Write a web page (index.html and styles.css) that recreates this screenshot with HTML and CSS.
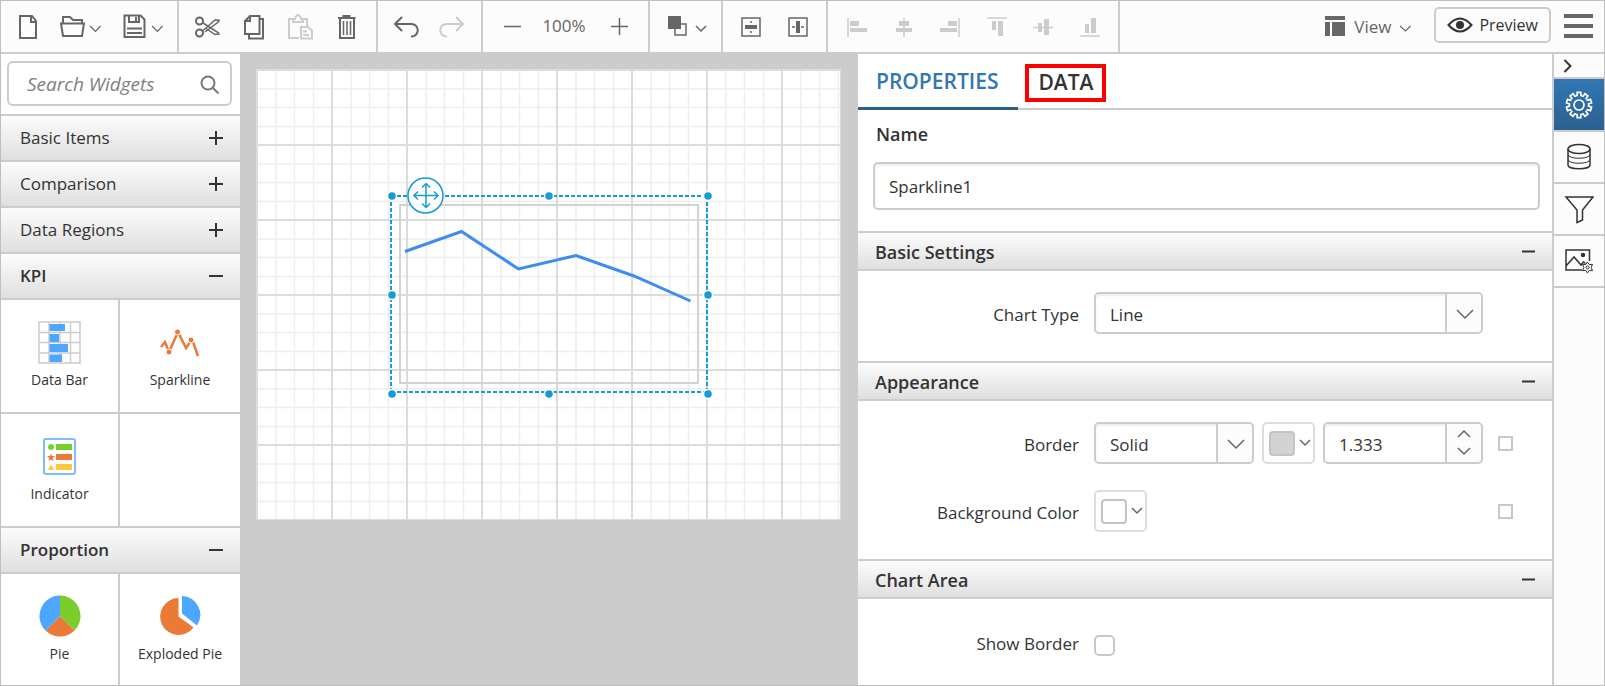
FILE: index.html
```html
<!DOCTYPE html>
<html lang="en">
<head>
<meta charset="utf-8">
<title>Report Designer</title>
<link rel="stylesheet" href="styles.css">
</head>
<body>
<div class="app">
  <header class="toolbar">
    <div class="group group-file">
      <button class="tool" aria-label="New"><svg width="24" height="28" class="ico"><path d="M4 3h12l4 5v17H4z"/><path d="M15 3v6h5"/></svg></button>
      <button class="tool" aria-label="Open"><svg width="44" height="28" class="ico"><path d="M4 10V4h7l3 3h9v3M2 10.500h23l-2 12.500H4z"/><path class="thin" d="M31 13l5.500 5.500L41.500 13"/></svg></button>
      <button class="tool" aria-label="Save"><svg width="44" height="28" class="ico"><path d="M2.500 2.500h16l4 4v17.500h-20zM7 2.500V9h10V2.500M5 15.500h15M5 20h15"/><path d="M14 4v4"/><path class="thin" d="M30 13l5.500 5.500L40.500 13"/></svg></button>
    </div>
    <div class="group group-edit">
      <button class="tool" aria-label="Cut"><svg width="28" height="28" class="ico"><circle cx="5.500" cy="8" r="3.500"/><circle cx="5.500" cy="20" r="3.500"/><path class="mid" d="M9 10l15 9.500 1 1.500-4 .5L12 15.500M8.500 18L21 7l4 .2-.5 1.600L11 19"/></svg></button>
      <button class="tool" aria-label="Copy"><svg width="24" height="28" class="ico"><path d="M8 3h9.500v18H3V8zM8 3v5H3M18 6h3v19.500H7V22"/></svg></button>
      <button class="tool" aria-label="Paste" disabled><svg width="28" height="28" class="ico"><path d="M13 25H3V6h4M17 6h4v7M7 9V6h2q1-4 3-4t3 4h2v3zM15 14h7l4 4v7.500H15zM17 18.500h4M17 22h6"/></svg></button>
      <button class="tool" aria-label="Delete"><svg width="24" height="28" class="ico"><path d="M4 5h17.500M9.500 5V3h6v2M6 5v20h14V5"/><path class="mid" d="M9.500 8v14M13 8v14M16.500 8v14"/></svg></button>
    </div>
    <div class="group group-history">
      <button class="tool" aria-label="Undo"><svg width="28" height="28" class="ico"><path d="M10 4L3 11l7 7M3 11h16.500a6 6 0 0 1 0 12.500H19"/></svg></button>
      <button class="tool" aria-label="Redo" disabled><svg width="28" height="28" class="ico"><path d="M18 4l7 7-7 7M25 11H8.500a6 6 0 0 0 0 12.500H9"/></svg></button>
    </div>
    <div class="group group-zoom">
      <button class="tool" aria-label="Zoom out"><svg width="21" height="28" class="ico"><path class="mid" d="M2 13.500h17"/></svg></button>
      <output class="zoom">100%</output>
      <button class="tool" aria-label="Zoom in"><svg width="21" height="28" class="ico"><path class="mid" d="M2 13.500h17M10.500 5v17"/></svg></button>
    </div>
    <div class="group group-order">
      <button class="tool" aria-label="Order"><svg width="43" height="28" class="ico"><rect class="mid" x="9" y="11" width="11" height="11"/><rect class="solid" x="2" y="3" width="13" height="13"/><path class="mid" d="M30 13l5 5 5-5"/></svg></button>
    </div>
    <div class="group group-center">
      <button class="tool" aria-label="Center horizontally"><svg width="24" height="28" class="ico"><rect class="mid" x="3" y="5" width="18" height="18"/><path class="solid" d="M6 12h12v4H6z"/><path class="mid" d="M12 8v2M12 18v2"/></svg></button>
      <button class="tool" aria-label="Center vertically"><svg width="24" height="28" class="ico"><rect class="mid" x="3" y="5" width="18" height="18"/><path class="solid" d="M10 8h4v12h-4z"/><path class="mid" d="M6 14h3M15 14h3"/></svg></button>
    </div>
    <div class="group group-align">
      <button class="tool" aria-label="Align left" disabled><svg width="24" height="28" class="ico"><path class="mid" d="M3 5v19"/><path class="solid" d="M5 8h9v5H5zM5 15h17v4H5z"/></svg></button>
      <button class="tool" aria-label="Align center" disabled><svg width="24" height="28" class="ico"><path class="mid" d="M12 5v19"/><path class="solid" d="M7 8h10v5H7zM4 15h16v4H4z"/></svg></button>
      <button class="tool" aria-label="Align right" disabled><svg width="24" height="28" class="ico"><path class="mid" d="M21 5v19"/><path class="solid" d="M10 8h9v5h-9zM2 15h17v4H2z"/></svg></button>
      <button class="tool" aria-label="Align top" disabled><svg width="24" height="28" class="ico"><path class="mid" d="M2 5h20"/><path class="solid" d="M7 8h4v9H7zM13 8h5v15h-5z"/></svg></button>
      <button class="tool" aria-label="Align middle" disabled><svg width="24" height="28" class="ico"><path class="mid" d="M2 14.500h20"/><path class="solid" d="M7 10h4v9H7zM13 6h5v16h-5z"/></svg></button>
      <button class="tool" aria-label="Align bottom" disabled><svg width="24" height="28" class="ico"><path class="mid" d="M2 23h20"/><path class="solid" d="M7 11h4v9H7zM13 5h5v15h-5z"/></svg></button>
    </div>
    <div class="actions">
      <button class="tool view"><svg width="24" height="28" class="ico"><path class="solid" d="M2 3h20v4H2zM2 9h5v14H2zM9 9h13v14H9z"/></svg><span>View</span><svg width="15" height="28" class="ico"><path class="thin" d="M2 13l5.500 5 5-5"/></svg></button>
      <button class="preview"><svg width="26" height="18" class="eye"><path d="M1.500 9Q13-4 24.500 9 13 22 1.500 9z"/><circle cx="13" cy="9" r="4"/></svg><span>Preview</span></button>
      <button class="tool menu" aria-label="Menu"><svg width="32" height="28" class="ico"><path class="solid" d="M1 1h29v4H1zM1 11h29v4H1zM1 21h29v4H1z"/></svg></button>
    </div>
  </header>

  <div class="workspace">
    <aside class="widgets">
      <div class="search-area">
        <label class="search">
          <input type="search" placeholder="Search Widgets" aria-label="Search Widgets">
          <svg width="22" height="22"><circle cx="10" cy="10" r="6.500"/><path d="M14.500 14.500l6 6"/></svg>
        </label>
      </div>
      <button class="category"><span>Basic Items</span><svg width="14" height="14"><path d="M0 7h14M7 0v14"/></svg></button>
      <button class="category"><span>Comparison</span><svg width="14" height="14"><path d="M0 7h14M7 0v14"/></svg></button>
      <button class="category"><span>Data Regions</span><svg width="14" height="14"><path d="M0 7h14M7 0v14"/></svg></button>
      <button class="category open"><span>KPI</span><svg width="14" height="14"><path d="M0 7h14"/></svg></button>
      <div class="tiles">
        <button class="tile">
          <svg width="44" height="44"><g fill="none" stroke="#ccc" stroke-width="1.500"><path d="M1 1h41v41H1zM11 1v41M22 1v41M32.500 1v41M1 11.500h41M1 21.500h41M1 32h41"/></g><path fill="#4da6ff" d="M11.500 3H27v7H11.500zM11.500 13H21v8h-9.500zM11.500 23H30v8H11.500zM11.500 33.500H24V41H11.500z"/></svg>
          <span>Data Bar</span>
        </button>
        <button class="tile">
          <svg width="44" height="44"><path fill="none" stroke="#eb7a37" stroke-width="2.500" d="M3 26l4-5 4 10L20 11l8 16 6-9 6 17"/><g fill="#eb7a37" stroke="#fff"><circle cx="11" cy="31" r="3"/><circle cx="19.500" cy="11" r="3"/><circle cx="33" cy="19" r="3"/></g></svg>
          <span>Sparkline</span>
        </button>
        <button class="tile">
          <svg width="44" height="44"><rect x="6" y="4" width="31" height="35" rx="2" fill="#fff" stroke="#7dbcff" stroke-width="2"/><circle cx="13" cy="12" r="3" fill="#7bcd29"/><path fill="#7bcd29" d="M18 9h16v6H18z"/><path fill="#eb7a37" d="M18 19h16v6H18zM13 18.500l1 2.500h3l-2.200 2 .8 3-2.600-1.600L10.400 26l.8-3L9 21h3z"/><path fill="#fdc840" d="M18 29h16v6H18zM13 29l3 6h-6z"/></svg>
          <span>Indicator</span>
        </button>
        <div class="tile"></div>
      </div>
      <button class="category open"><span>Proportion</span><svg width="14" height="14"><path d="M0 7h14"/></svg></button>
      <div class="tiles">
        <button class="tile">
          <svg width="44" height="44"><path fill="#7bcd29" d="M22 21V.5A20.500 20.500 0 0 1 36.500 35.500z"/><path fill="#eb7a37" d="M22 21l14.500 14.500a20.500 20.500 0 0 1-29 0z"/><path fill="#4da6ff" d="M22 21L7.500 35.500A20.500 20.500 0 0 1 22 .5z"/></svg>
          <span>Pie</span>
        </button>
        <button class="tile">
          <svg width="44" height="44"><path fill="#eb7a37" d="M20.500 21.500V3A18.500 18.500 0 1 0 35.500 32.500z"/><path fill="#4da6ff" d="M24 18.500V1a19 19 0 0 1 15 29.500z"/></svg>
          <span>Exploded Pie</span>
        </button>
      </div>
    </aside>

    <main class="canvas">
      <div class="sheet">
        <svg class="grid" width="100%" height="100%">
          <defs>
            <pattern id="grid" x="1" y="1" width="75" height="75" patternUnits="userSpaceOnUse">
              <path class="minor" d="M18 0v75M36.500 0v75M55.500 0v75M0 18h75M0 36.500h75M0 55.500h75"/>
              <path class="major" d="M74 0v75M0 74h75"/>
            </pattern>
          </defs>
          <rect width="100%" height="100%" fill="url(#grid)"/>
        </svg>
        <svg class="item" width="328" height="226">
          <rect class="frame" x="14" y="32" width="298" height="178"/>
          <polyline class="series" points="19,78.500 75.500,58.500 132.500,96 190,82.500 248,103 304.500,128"/>
          <path class="outline" d="M5 23h317M5 219h317M5 23v197M321 23v197"/>
          <g class="handles">
            <circle cx="6" cy="23" r="4.500"/><circle cx="163" cy="23" r="4.500"/><circle cx="322" cy="23" r="4.500"/>
            <circle cx="6" cy="122" r="4.500"/><circle cx="322" cy="122" r="4.500"/>
            <circle cx="6" cy="221" r="4.500"/><circle cx="163" cy="221" r="4.500"/><circle cx="322" cy="221" r="4.500"/>
          </g>
          <g class="mover"><circle cx="39.500" cy="22.500" r="17.500"/><path d="M28 22.500h24M40 10.500v24M36 14.500l4-4 4 4M36 30.500l4 4 4-4M32 18.500l-4 4 4 4M48 18.500l4 4-4 4"/></g>
        </svg>
      </div>
    </main>

    <section class="props">
      <nav class="tabs">
        <button class="tab active">PROPERTIES</button>
        <button class="tab marked">DATA</button>
      </nav>
      <div class="name-block">
        <label for="name">Name</label>
        <input id="name" class="field" type="text" value="Sparkline1">
      </div>
      <button class="section"><span>Basic Settings</span><svg width="13" height="3"><path d="M0 1.500h13"/></svg></button>
      <div class="rows">
        <div class="row">
          <label for="type">Chart Type</label>
          <div class="controls">
            <div class="combo"><select id="type"><option>Line</option></select><svg width="36" height="38"><path d="M10 16l8 8 8-8"/></svg></div>
          </div>
        </div>
      </div>
      <button class="section"><span>Appearance</span><svg width="13" height="3"><path d="M0 1.500h13"/></svg></button>
      <div class="rows">
        <div class="row">
          <label for="border">Border</label>
          <div class="controls">
            <div class="combo"><select id="border"><option>Solid</option></select><svg width="36" height="38"><path d="M10 16l8 8 8-8"/></svg></div>
            <button class="color" aria-label="Border color"><i class="swatch gray"></i><svg width="12" height="8"><path d="M1 1l5 5 5-5"/></svg></button>
            <div class="combo"><input type="text" value="1.333" aria-label="Border width"><svg width="36" height="38"><path d="M11 13l6-6 6 6M11 24l6 6 6-6"/></svg></div>
          </div>
          <input class="reset" type="checkbox" aria-label="Border expression">
        </div>
        <div class="row">
          <label for="bg">Background Color</label>
          <div class="controls">
            <button id="bg" class="color"><i class="swatch"></i><svg width="12" height="8"><path d="M1 1l5 5 5-5"/></svg></button>
          </div>
          <input class="reset" type="checkbox" aria-label="Background expression">
        </div>
      </div>
      <button class="section"><span>Chart Area</span><svg width="13" height="3"><path d="M0 1.500h13"/></svg></button>
      <div class="rows last">
        <div class="row">
          <label for="show">Show Border</label>
          <div class="controls"><input id="show" class="check" type="checkbox"></div>
        </div>
      </div>
    </section>

    <nav class="rail">
      <button class="collapse" aria-label="Collapse"><svg width="10" height="14"><path d="M1.500 1l6 6-6 6"/></svg></button>
      <button class="rail-item selected" aria-label="Properties">
        <svg width="30" height="30" viewBox="-15 -15 30 30">
          <defs><path id="tooth" d="M-2.900-9.200L-1.900-9.500-1.800-12.600H1.800L1.900-9.500 2.900-9.200"/></defs>
          <use href="#tooth"/><use href="#tooth" transform="rotate(36)"/><use href="#tooth" transform="rotate(72)"/><use href="#tooth" transform="rotate(108)"/><use href="#tooth" transform="rotate(144)"/><use href="#tooth" transform="rotate(180)"/><use href="#tooth" transform="rotate(216)"/><use href="#tooth" transform="rotate(252)"/><use href="#tooth" transform="rotate(288)"/><use href="#tooth" transform="rotate(324)"/>
          <circle r="5"/>
        </svg>
      </button>
      <button class="rail-item" aria-label="Data"><svg width="30" height="30"><ellipse cx="15" cy="7" rx="11" ry="4.500"/><path d="M4 7v16c0 5 22 5 22 0V7"/><path class="fine" d="M4 12.500c0 5 22 5 22 0M4 17.500c0 5 22 5 22 0"/></svg></button>
      <button class="rail-item" aria-label="Filter"><svg width="30" height="30"><path d="M2 3h27L18.500 16v10L13 28.500V16z"/></svg></button>
      <button class="rail-item" aria-label="Image settings"><svg width="30" height="30"><path d="M18 24H2V4h23.500v11M2 20l8-9 7 8 2.500-3 2 1.500"/><circle class="dot" cx="19" cy="9" r="1.500"/><path class="fine" d="M23.500 16l1.700 2.600 3.300-.3-1.300 3.200 1.300 3.200-3.300-.3L23.500 27l-1.700-2.600-3.300.3 1.300-3.200-1.300-3.200 3.300.3z"/><circle class="fine" cx="23.500" cy="21.500" r="1.500"/></svg></button>
    </nav>
  </div>
</div>
</body>
</html>
```

FILE: styles.css
```css
* { box-sizing: border-box; }

body {
  margin: 0;
  font-family: "Open Sans", "Noto Sans", sans-serif;
  font-size: 17px;
  color: #333;
}

button, input, select {
  font: inherit;
  color: inherit;
  margin: 0;
  padding: 0;
  border: 0;
  background: none;
}

button { cursor: pointer; }
svg { display: block; flex: none; }

.app {
  height: 100vh;
  min-height: 400px;
  display: flex;
  flex-direction: column;
  border: 1px solid #bfbfbf;
  background: #fff;
  overflow: hidden;
}

/* toolbar */
.toolbar {
  flex: none;
  height: 53px;
  display: flex;
  background: #fcfcfc;
  border-bottom: 2px solid #ccc;
}

.group {
  display: flex;
  align-items: center;
  border-right: 2px solid #ccc;
}

.group-file { gap: 19px; padding: 0 11px 0 15px; }
.group-edit { gap: 20px; padding: 0 18px 0 15px; }
.group-history { gap: 18px; padding: 0 15px 0 14px; }
.group-zoom { padding: 0 18px 0 19px; }
.group-order { padding: 0 12px 0 16px; }
.group-center { gap: 23px; padding: 0 16px; }
.group-align { width: 292px; justify-content: space-between; padding: 0 16px 0 17px; }

.tool { display: flex; align-items: center; color: #666; }
.tool:disabled { color: #ccc; }
.zoom { width: 86px; padding: 0 4px 2px 0; text-align: center; color: #666; }

.ico { fill: none; stroke: currentColor; stroke-width: 2; }
.ico .thin { stroke-width: 1.2; }
.ico .mid { stroke-width: 1.5; }
.ico rect.mid { fill: #fcfcfc; }
.ico .solid { fill: currentColor; stroke: none; }

.actions {
  margin-left: auto;
  display: flex;
  align-items: center;
  padding-right: 9px;
}

.view { gap: 7px; margin-right: 21px; }

.preview {
  height: 36px;
  display: flex;
  align-items: center;
  gap: 6px;
  margin: 0 12px 4px 0;
  padding: 0 11px;
  border: 2px solid #ccc;
  border-radius: 5px;
  font-size: 16px;
}

.eye { fill: none; stroke: #333; stroke-width: 2; }
.eye circle { fill: #333; stroke: none; }

/* workspace */
.workspace {
  flex: 1;
  min-height: 0;
  display: grid;
  grid-template-columns: 239px minmax(0, 618fr) minmax(0, 694fr) 52px;
}

.widgets { overflow: hidden; }

.search-area {
  padding: 7px 8px 8px 6px;
  border-bottom: 2px solid #ccc;
}

.search {
  height: 45px;
  display: flex;
  align-items: center;
  padding: 0 10px 0 18px;
  border: 2px solid #ccc;
  border-radius: 6px;
}

.search input { flex: 1; min-width: 0; font-size: 19px; font-style: italic; outline: 0; }
.search input::placeholder { color: #808080; }
.search svg { fill: none; stroke: #777; stroke-width: 2; }

.category {
  width: 100%;
  height: 46px;
  display: flex;
  align-items: center;
  justify-content: space-between;
  padding: 0 17px 0 19px;
  border-bottom: 2px solid #ccc;
  background: linear-gradient(#fcfcfc, #dfdfdf);
}

.category span { padding-bottom: 2px; }
.category.open { font-weight: 600; }
.category svg { stroke: #333; stroke-width: 2; }

.tiles {
  display: grid;
  grid-template-columns: 119px 1fr;
}

.tile {
  height: 114px;
  display: flex;
  flex-direction: column;
  align-items: center;
  gap: 5px;
  padding-top: 21px;
  border-bottom: 2px solid #ccc;
  font-size: 14px;
}

.tile:nth-child(odd) { border-right: 2px solid #ccc; }

/* canvas */
.canvas { background: #ccc; padding: 15px 17px 15px 16px; }

.sheet {
  position: relative;
  height: 451px;
  border: 1px solid #ddd;
  background: #fff;
}

.grid .minor { stroke: #eee; stroke-width: 1.5; fill: none; }
.grid .major { stroke: #dcdcdc; stroke-width: 2; fill: none; }

.item { position: absolute; left: 129px; top: 103px; }
.frame { fill: none; stroke: #d3d3d3; stroke-width: 2; }
.series { fill: none; stroke: #3f8cf3; stroke-width: 3; }
.outline { stroke: #179bd7; stroke-width: 2; stroke-dasharray: 4 2; }
.handles { fill: #179bd7; stroke: #fff; stroke-width: 1.5; }
.mover { fill: none; stroke: #179bd7; stroke-width: 1.5; }
.mover circle { fill: #fff; }

/* properties */
.props { background: #fff; overflow: hidden; }

.tabs {
  height: 56px;
  display: flex;
  align-items: flex-start;
  gap: 7px;
  box-shadow: inset 0 -2px #ccc;
  font-size: 21px;
  font-weight: 600;
}

.tab.active {
  height: 56px;
  padding: 0 20px 0 18px;
  color: #3277b3;
  border-bottom: 3px solid #2a6090;
}

.tab.marked {
  height: 38px;
  margin-top: 10px;
  padding: 0 9px 3px;
  border: 4px solid #f00;
}

.name-block {
  display: flex;
  flex-direction: column;
  gap: 16px;
  padding: 12px 12px 21px 15px;
}

.name-block label { padding-left: 3px; font-size: 18px; font-weight: 600; line-height: 24px; }

.field {
  height: 48px;
  padding: 0 14px;
  border: 2px solid #ccc;
  border-radius: 5px;
  box-shadow: inset 0 2px 2px #eee;
}

.section {
  width: 100%;
  height: 40px;
  display: flex;
  align-items: center;
  justify-content: space-between;
  padding: 0 17px;
  border: solid #ccc;
  border-width: 2px 0;
  background: linear-gradient(#fcfcfc, #dfdfdf);
  font-size: 18px;
  font-weight: 600;
}

.section span { padding-top: 2px; }
.section svg { stroke: #333; stroke-width: 2; }

.rows {
  display: grid;
  gap: 26px;
  padding: 21px 39px 27px 0;
}

.rows.last { padding-top: 25px; }

.row {
  display: grid;
  grid-template-columns: 221fr 389fr 15px;
  gap: 15px;
  align-items: center;
}

.row label { padding-top: 3px; text-align: right; }
.rows.last label { padding: 0 0 3px; }
.controls { display: flex; align-items: center; gap: 8px; min-height: 42px; }

.combo {
  flex: 1;
  min-width: 0;
  height: 42px;
  display: grid;
  grid-template-columns: 1fr 36px;
  border: 2px solid #ccc;
  border-radius: 5px;
  background: #fff;
}

.combo select, .combo input {
  grid-area: 1 / 1 / 2 / 3;
  width: 100%;
  min-width: 0;
  padding: 2px 36px 0 14px;
  appearance: none;
  border-radius: 4px;
  box-shadow: inset 0 2px 2px #eee;
}

.combo svg {
  grid-area: 1 / 2;
  fill: none;
  stroke: #666;
  stroke-width: 1.5;
  background: #fcfcfc;
  border-left: 2px solid #ccc;
  border-radius: 0 4px 4px 0;
  pointer-events: none;
}

.color {
  width: 53px;
  height: 42px;
  display: flex;
  align-items: center;
  gap: 4px;
  padding-left: 5px;
  border: 2px solid #ddd;
  border-radius: 5px;
}

.color svg { fill: none; stroke: #666; stroke-width: 1.5; }

.swatch {
  width: 26px;
  height: 25px;
  border: 2px solid #c4c4c4;
  border-radius: 4px;
}

.swatch.gray { background: #d3d3d3; }

.reset, .check {
  appearance: none;
  width: 15px;
  height: 15px;
  border: 2px solid #c8c8c8;
}

.check { width: 21px; height: 21px; border-radius: 5px; }

/* side rail */
.rail {
  display: flex;
  flex-direction: column;
  background: #fcfcfc;
  border-left: 2px solid #ccc;
}

.collapse {
  height: 25px;
  padding-left: 9px;
  border-bottom: 2px solid #ccc;
}

.rail-item {
  height: 52px;
  display: flex;
  align-items: center;
  justify-content: center;
  border-bottom: 2px solid #ccc;
}

.rail svg { fill: none; stroke: #333; stroke-width: 1.5; }
.rail .fine { stroke-width: 1; }
.rail .dot { fill: #333; }
.rail .collapse svg { stroke-width: 2; }
.rail .selected { height: 53px; background: linear-gradient(#3277b3, #2a6090); }
.rail .selected svg { stroke: #fff; stroke-width: 1.7; }
```
